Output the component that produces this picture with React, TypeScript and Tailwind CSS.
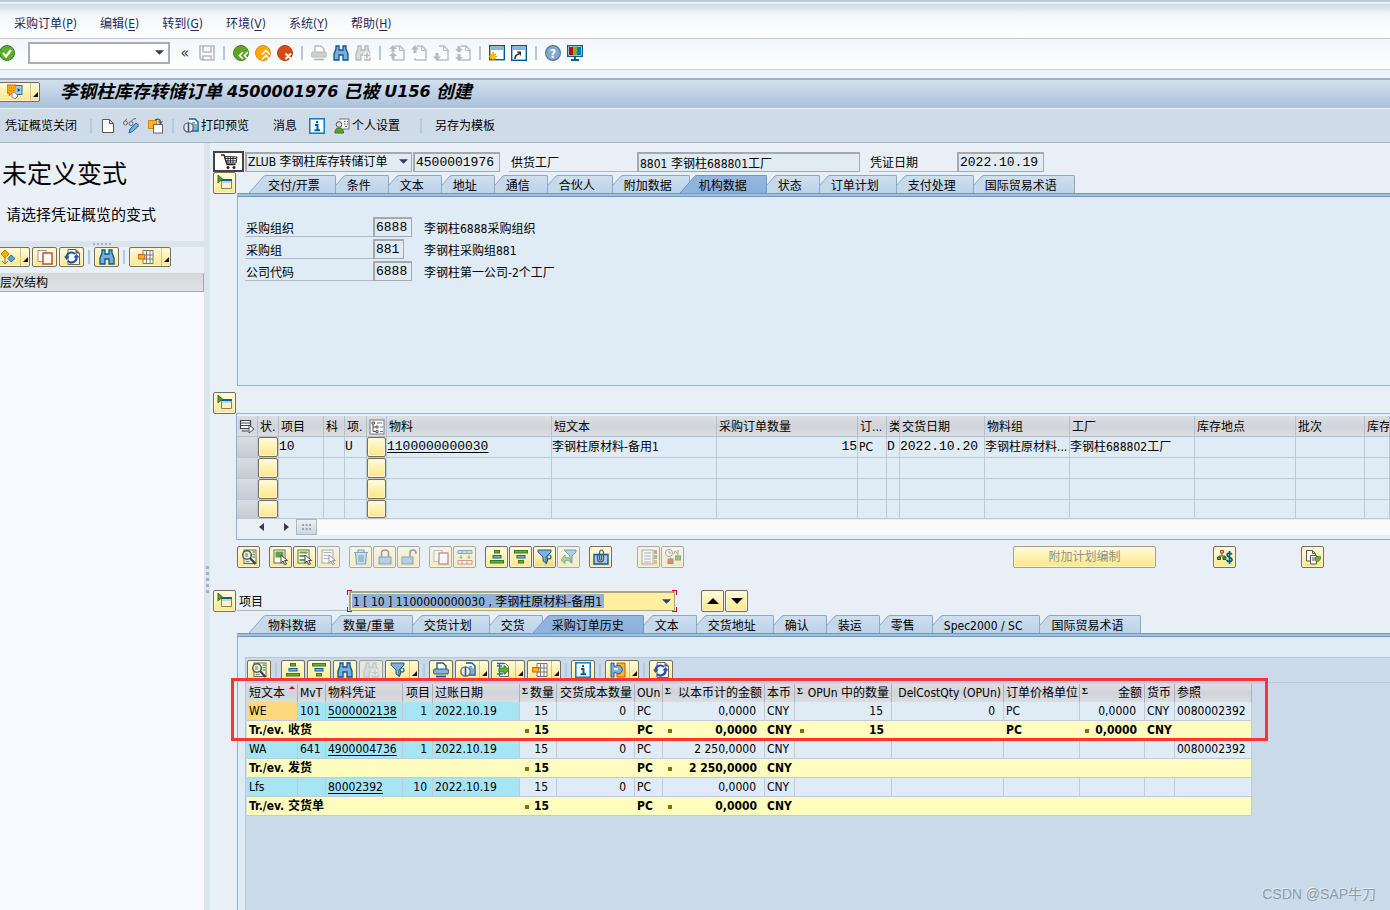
import type { ReactNode } from "react";
import { clsx } from "clsx";

const mono = "font-['Liberation_Mono','Noto_Sans_CJK_SC',monospace] text-[13px]";
const field = "h-5 border border-t-2 border-l-2 border-[#a3a9ae] bg-[#e0ebf4] px-px outline-none";
const yellow = "border border-[#77705a] rounded-[2px] bg-linear-to-b from-[#fffbe3] via-[#fff1ae] to-[#fde68a] shadow-[inset_0_0_0_1px_#fff6cf]";

const binoculars = "M1 15V9l2-5V1h3v4h4V1h3v3l2 5v6h-5v-5H6v5z";
const funnel = "M1 1h13v2L9 8v6l-3-2V8L1 3z";
const page = "M3.5 1.5h6l3 3v10h-9z";
const cursor = "M8 6v8l2-2 2 4 1.500-1-2-3.500h3z";

const Chevrons = ({ d }: { d: string }) => <path d={d} fill="none" stroke="#fff" strokeWidth="1.600" />;
const GreyPage = ({ arrow }: { arrow: string }) => (
  <>
    <path d="M6 1h5l4 4v10H4v-2" fill="none" stroke="#bdbdbd" strokeWidth="1.500" />
    <path d="M10.500 1v4.500H15" fill="none" stroke="#bdbdbd" />
    <path d={arrow} fill="#b9b9b9" />
  </>
);
const Printer = ({ stroke, fill }: { stroke: string; fill: string }) => (
  <>
    <path d="M4 7V1h6l3 3v3" fill="#fff" stroke={stroke} strokeWidth="1.400" />
    <rect x=".7" y="7" width="14.600" height="5" rx="1" fill={fill} stroke={stroke} />
    <path d="M3 14.500h10" stroke={stroke} strokeWidth="1.800" />
  </>
);
const Report = (
  <>
    <path d="M6 1h6l3 3v9H8" fill="#fff" stroke="#00639c" strokeWidth="1.400" />
    <path d="M9 5h3M9 7h5M10 9h4M10 11h4" stroke="#00639c" />
    <circle cx="5.500" cy="9.500" r="4.700" fill="#e9edf0" stroke="#666" strokeWidth="1.300" />
    <path d="M5.500 5v9" stroke="#27527c" strokeWidth="1.500" />
  </>
);
const Grid = (
  <>
    <path d="M5 1.500h10v13H5zM5 6h10M5 10h10M8.500 1.500v13M12 1.500v13" fill="#fff" stroke="#777" />
    <rect x=".7" y="5.500" width="6" height="4.500" fill="#ffb400" stroke="#e0561c" />
  </>
);
const Refresh = (
  <>
    <path d="M4 .5h8l3.500 3.500v11.500H4z" fill="#fff" stroke="#666" />
    <path d="M11.500 .5v4h4z" fill="#555" />
    <path d="M2.500 8A5 5 0 0 1 11 5M12.500 8A5 5 0 0 1 4 12" fill="none" stroke="#2450a5" strokeWidth="2.200" />
    <path d="M0 7.500h5.500L2.700 11zM9.500 8.500h6L12.500 5z" fill="#2450a5" />
  </>
);
const Detail = (
  <>
    <rect x="3" y="1" width="12" height="13.500" fill="#fff" stroke="#666" />
    <path d="M11.500 3h2.500M11.500 5.500h2.500M11.500 8h2.500M4.500 12.500h4" stroke="#5aa832" strokeWidth="1.600" />
    <circle cx="6" cy="6" r="4.300" fill="#e4efe6" stroke="#555" strokeWidth="1.500" />
    <path d="M4 5h3M4 7h3" stroke="#3d9a2c" />
    <path d="m9 9 5.500 6" stroke="#444" strokeWidth="2.400" />
  </>
);
const Info = (
  <>
    <rect x=".8" y=".8" width="14.400" height="14.400" fill="#fff" stroke="#0a7cc4" strokeWidth="1.500" />
    <path d="M8 3v2.200M6 7h2.500v5M5.500 12.300h5.500" stroke="#00609c" strokeWidth="2" fill="none" />
  </>
);

const icons: Record<string, ReactNode> = {
  check: (
    <>
      <circle cx="8" cy="8" r="7.500" fill="#5cae26" stroke="#2c7d34" />
      <path d="m4 8 3 3.500L12 5" fill="none" stroke="#fff" strokeWidth="2.200" />
    </>
  ),
  save: <path d="M1 1h14v14H3l-2-2zM4 1v6h8V1M4 15v-4h8v4" fill="none" stroke="#b9b9b9" strokeWidth="1.600" />,
  back: (
    <>
      <circle cx="8" cy="8" r="7.500" fill="#62a420" stroke="#388324" />
      <Chevrons d="M10 7 6.500 10.500 10 14M15 7l-3.500 3.500L15 14" />
    </>
  ),
  exit: (
    <>
      <circle cx="8" cy="8" r="7.500" fill="#fbab00" stroke="#e08a10" />
      <Chevrons d="m7 9.500 4-4 4 4M7 14.500l4-4 4 4" />
    </>
  ),
  cancel: (
    <>
      <circle cx="8" cy="8" r="7.500" fill="#d64a13" stroke="#b43c10" />
      <path d="m8.500 8.500 5.500 5.500M14 8.500 8.500 14" stroke="#fff" strokeWidth="2" />
    </>
  ),
  printOff: <Printer stroke="#b9b9b9" fill="#cfcfcf" />,
  print: <Printer stroke="#1d5c8a" fill="#8fb0cf" />,
  find: <path d={binoculars} fill="#7fabd9" stroke="#005c95" strokeWidth="1.300" />,
  findNext: (
    <>
      <path d={binoculars} fill="#dcdcdc" stroke="#b9b9b9" strokeWidth="1.300" />
      <path d="M12 7v7M8.500 10.500h7" stroke="#fff" strokeWidth="4" />
      <path d="M12 7.500v6M9 10.500h6" stroke="#b9b9b9" strokeWidth="1.600" />
    </>
  ),
  first: <GreyPage arrow="M4 0 0 4h2.500v2H0l4 1 4-1H5.500V4H8zM4 7l-4 4h2.500v3h3v-3H8z" />,
  prev: <GreyPage arrow="M4 0 0 4.500h2.500V8h3V4.500H8z" />,
  next: <GreyPage arrow="M4 16 0 11.500h2.500V8h3v3.500H8z" />,
  last: <GreyPage arrow="M4 16l-4-4h2.500v-2H0l4-1 4 1H5.500v2H8zM4 8 0 4h2.500V1h3v3H8z" />,
  session: (
    <>
      <rect x=".7" y=".7" width="14.600" height="14" fill="#fff" stroke="#00598f" strokeWidth="1.400" />
      <rect x="1.500" y="1.500" width="13" height="3.500" fill="#8eb1d8" />
      <path d="M4 7v9M0 11.500h8M1.200 8.700l5.600 5.600M6.800 8.700l-5.600 5.600" stroke="#ef9a10" strokeWidth="1.500" />
      <circle cx="4" cy="11.500" r="2.200" fill="#ffc800" />
    </>
  ),
  shortcut: (
    <>
      <rect x=".7" y=".7" width="14.600" height="14.600" fill="#fff" stroke="#00598f" strokeWidth="1.400" />
      <rect x="1.500" y="1.500" width="13" height="3.500" fill="#8eb1d8" />
      <path d="M4 14c0-3 1-4.500 4-5" fill="none" stroke="#333" strokeWidth="1.600" />
      <path d="M5.500 6.500H10V11z" fill="#333" />
    </>
  ),
  help: (
    <>
      <circle cx="8" cy="8" r="7.400" fill="#82a8d3" stroke="#4c7aa3" strokeWidth="1.200" />
      <text x="8" y="12.500" textAnchor="middle" fontSize="12" fontWeight="700" fill="#fff">?</text>
    </>
  ),
  monitor: (
    <>
      <rect x=".7" y=".7" width="14.600" height="10.600" fill="#fff" stroke="#00629b" strokeWidth="1.400" />
      <path d="M2 2h4v8H2z" fill="#cf0000" />
      <path d="M6 2h4v8H6z" fill="#7ab51d" />
      <path d="M10 2h4v8h-4z" fill="#0077c8" />
      <path d="M8 11v4M4 15h8" stroke="#00629b" strokeWidth="2" />
    </>
  ),
  services: (
    <>
      <path d="M0 1h9v8H5l-3 2.500V9H0z" fill="#ffab1a" stroke="#df5a12" />
      <path d="M2 4h5M2 6.500h5" stroke="#df5a12" strokeDasharray="1 1" />
      <path d="M9 1.500h6v9H8" fill="#a9cbe8" stroke="#2a6a9d" />
      <path d="m10.500 4 3 2-3 2z" fill="#0b4f85" />
      <path d="M5 9c1-2 3 0 4 1l2 2-3 3-3-2z" fill="#fff" stroke="#888" />
    </>
  ),
  page: <path d="M2.500 1.500h7l4 4v9h-11zM9.500 1.500v4h4" fill="#fff" stroke="#555" />,
  change: (
    <>
      <circle cx="2.500" cy="5" r="2" fill="none" stroke="#666" />
      <circle cx="8" cy="5.500" r="2" fill="none" stroke="#666" />
      <path d="M2 3 4 .7M8 3.500 11 .7h2" stroke="#666" fill="none" />
      <path d="m6 15 1-4 6-6 3 2.500-6.500 6z" fill="#76b0de" stroke="#1a6799" />
    </>
  ),
  other: (
    <>
      <rect x=".5" y="2.500" width="8" height="8" fill="#ffb51c" stroke="#d58a00" />
      <rect x="5.500" y="6.500" width="9" height="8.500" fill="#fff" stroke="#666" />
      <path d="M7 2c3-1.500 5-1 5.500 2" fill="none" stroke="#555" strokeWidth="1.400" />
      <path d="M10 3.500h5L12.500 6.500z" fill="#555" />
    </>
  ),
  preview: Report,
  info: Info,
  person: (
    <>
      <path d="M5 1h10v10H9" fill="#f2f4f5" stroke="#777" />
      <path d="M10 3.500h1.500M10 6h1.500M13 3.500h1M13 6h1M11 8.500h2" stroke="#555" />
      <circle cx="5" cy="6.500" r="2.800" fill="#e2ddd6" stroke="#555" />
      <path d="M1 15c0-4 1.500-5 4-5s4.500 1 4.500 5z" fill="#56a02c" stroke="#39701f" />
    </>
  ),
  cart: (
    <>
      <path d="M0 1h3l3 9.500h8.500" fill="none" stroke="#222" strokeWidth="1.300" />
      <path d="M3.500 2.500 16 3l-1 6H5.500zM4 4.500h11.500M5 6.800h10.500M7 2.500v6.500M9.500 2.500v6.500M12 2.500v6.500" fill="none" stroke="#333" />
      <circle cx="7" cy="13.500" r="1.500" fill="#222" />
      <circle cx="13" cy="13.500" r="1.500" fill="#222" />
    </>
  ),
  toggle: (
    <>
      <path d="M4.500 5.500h10v8h-10z" fill="#fdf3c3" stroke="#888266" />
      <path d="M4 5h11" stroke="#00629b" strokeWidth="2" />
      <path d="M4.500 7h10" stroke="#8fb3d4" />
      <path d="M1 0v8l4.500-4z" fill="#4f9a2a" stroke="#347a1d" />
    </>
  ),
  variant: (
    <>
      <path d="M5 1 9 5 5 9 1 5z" fill="#ffb000" stroke="#c97b00" />
      <path d="m11 6 4 3.500-4 3.500-3-3.500z" fill="#5ba3d3" stroke="#276a99" />
      <path d="M5 9v6M2 12l3 3 3-3" fill="none" stroke="#777" />
    </>
  ),
  copy: (
    <>
      <rect x="1" y="1.500" width="8" height="11" fill="#fff" stroke="#999" />
      <rect x="6" y="4" width="9" height="11" fill="#fff" stroke="#b5361c" strokeWidth="1.300" />
    </>
  ),
  refresh: Refresh,
  grid: Grid,
  detail: Detail,
  selectAll: (
    <>
      <rect x="1" y="1" width="11" height="13" fill="#fff" stroke="#666" />
      <path d="M2.500 2.500h8v6h-8z" fill="#5aa832" />
      <path d={cursor} fill="#fff" stroke="#444" />
    </>
  ),
  selectBlock: (
    <>
      <rect x="1" y="1" width="11" height="13" fill="#fff" stroke="#666" />
      <path d="M2.500 3.500h8M2.500 7h6M2.500 11h6" stroke="#5aa832" strokeWidth="2" />
      <path d={cursor} fill="#fff" stroke="#444" />
    </>
  ),
  deselect: (
    <>
      <rect x="1" y="1" width="11" height="13" fill="#fff" stroke="#777" />
      <path d="M2.500 3.500h8M2.500 6.500h6M2.500 9.500h6" stroke="#888" />
      <path d={cursor} fill="#fff" stroke="#555" />
    </>
  ),
  trash: <path d="M1 3.500h14M5 3V1h6v2M2.500 4l1 11h9l1-11M6 6v7M8 6v7M10 6v7" fill="#b9d3ea" stroke="#2c6b9c" strokeWidth="1.200" />,
  lock: (
    <>
      <path d="M4.500 8V4c0-4 7-4 7 0v4" fill="none" stroke="#555" strokeWidth="1.500" />
      <rect x="2" y="8" width="12" height="7" fill="#8fb5dc" stroke="#2c6b9c" />
    </>
  ),
  unlock: (
    <>
      <path d="M9 8V4c0-4 6-4 6 0v1" fill="none" stroke="#555" strokeWidth="1.500" />
      <rect x="1" y="8" width="11" height="7" fill="#8fb5dc" stroke="#2c6b9c" />
    </>
  ),
  insert: (
    <>
      <path d="M1 1.500h14v3H1zM5 1.500v3M10 1.500v3" fill="#b9d3ea" stroke="#2c6b9c" />
      <path d="M4 6v3M2.500 8 4 9.500 5.500 8M12 6v3M10.500 8l1.500 1.500L13.500 8" fill="none" stroke="#2c6b9c" />
      <path d="M1 11.500h14v3.500H1zM5 11.500V15M10 11.500V15" fill="#fff" stroke="#cf4f1c" />
    </>
  ),
  asc: (
    <>
      <rect x="5.500" y="1.500" width="5" height="2.500" fill="#67ad3c" stroke="#2f7c2b" />
      <rect x="4" y="6.500" width="8" height="2.500" fill="#7fb0dc" stroke="#1a5f92" />
      <rect x="1.500" y="11.500" width="13" height="2.500" fill="#67ad3c" stroke="#2f7c2b" />
    </>
  ),
  desc: (
    <>
      <rect x="1.500" y="1.500" width="13" height="2.500" fill="#67ad3c" stroke="#2f7c2b" />
      <rect x="4" y="6.500" width="8" height="2.500" fill="#7fb0dc" stroke="#1a5f92" />
      <rect x="5.500" y="11.500" width="5" height="2.500" fill="#67ad3c" stroke="#2f7c2b" />
    </>
  ),
  filter: (
    <>
      <path d={funnel} fill="#7fb0dc" stroke="#1a5f92" />
      <circle cx="12" cy="8" r="2" fill="none" stroke="#1a5f92" strokeWidth="1.200" />
      <path d="m11 10-2 5" stroke="#1a5f92" strokeWidth="1.300" />
    </>
  ),
  unfilter: (
    <>
      <path d="M3 1h12v2l-4 4v7l-2-1V7z" fill="#7fb0dc" stroke="#1a5f92" />
      <path d="M0 11 4 6v2.500c4-.5 6 1 6 5-1.500-2-3.500-2.500-6-2v3z" fill="#7dbb56" stroke="#2f7c2b" />
    </>
  ),
  attach: (
    <>
      <path d="M1 5.500h14V15H1z" fill="#a5c8e8" stroke="#00629b" strokeWidth="1.400" />
      <path d="M4.500 5v5c0 4 6 4 6 0V4c0-4-4-4-4 0v6c0 1.500 2 1.500 2 0V5" fill="none" stroke="#555" strokeWidth="1.200" />
    </>
  ),
  list: (
    <>
      <rect x="1" y="1" width="11" height="14" fill="#fff" stroke="#777" />
      <path d="M3 4h7M3 7h7M3 10h7M3 13h7" stroke="#777" />
      <path d="M13 1h3v4h-3z" fill="#d4584a" />
      <path d="M13 6h3v4h-3z" fill="#5aa832" />
      <path d="M13 11h3v4h-3z" fill="#e18a30" />
    </>
  ),
  schedule: (
    <>
      <circle cx="4" cy="4" r="3.500" fill="#fff" stroke="#666" />
      <path d="M4 2v2h2M9 5l1-3 3 3V1M5.500 10V8.500M13 7V5.500" fill="none" stroke="#666" />
      <rect x="3" y="10" width="5" height="4.500" fill="#cf3b2a" stroke="#8f2b1f" />
      <rect x="10.500" y="7" width="5" height="4" fill="#5aa832" stroke="#39701f" />
    </>
  ),
  price: (
    <>
      <path d="M5 3v4M2 9V7h6v2" fill="none" stroke="#555" />
      <path d="M3.500 1.500h3v2.500h-3z" fill="#ffb51c" stroke="#cf3b1a" />
      <path d="M.5 8h3v2.500h-3zM6 8h3v2.500H6z" fill="#5aa832" stroke="#1f5c1a" />
      <path d="M15 5.500c-1-2-5-2-5 .5s5 2 5 4.500-4 3-5.500.5M12.500 2v13" fill="none" stroke="#005a94" strokeWidth="1.700" />
    </>
  ),
  output: (
    <>
      <path d="M1.500 1.500h6l3 3V12h-9zM7.500 1.500v3h3" fill="#fff" stroke="#555" />
      <path d="M5.500 6.500h6V15h-6zM7 9h3M7 11h3" fill="#fff" stroke="#555" />
      <path d="M10 9c2-2 4-2 6-1-1 4-3 5-5 4.500z" fill="#6bb13b" stroke="#39701f" strokeWidth=".8" />
    </>
  ),
  export: (
    <>
      <path d={page} fill="#fff" stroke="#666" />
      <path d="M1 1.500h7M1 4h5M1 12h6" stroke="#1a6fa8" strokeWidth="1.500" />
      <path d="M3 6h5V3.500L13 8l-5 4.500V10H3z" fill="#5fae3d" stroke="#2f7c2b" />
    </>
  ),
  abc: (
    <>
      <path d="M7 1h8v14H7v-3c6 0 6-8 0-8z" fill="#ffb51c" stroke="#cf4f1c" />
      <path d="M1 1h3v3.500c2 0 2-1 4.500-1 5 0 5 8 0 8-2.500 0-2.500-1-4.500-1V15H1z" fill="#7fb0dc" stroke="#1a5f92" />
      <path d="M4 7h4" stroke="#fff" strokeWidth="1.500" />
    </>
  ),
  layout: (
    <>
      <path d="M1.500 1.500h10v8h-10zM1.500 4h10M1.500 6.500h10M3 12h6" fill="#fff" stroke="#445" strokeWidth="1.200" />
      <path d="M10 6v8l5-4z" fill="#fff" stroke="#445" />
    </>
  ),
  tree: (
    <>
      <rect x="1" y="1" width="14" height="14" fill="#fff" stroke="#777" />
      <path d="M4 4v8.500h3M4 8h3" fill="none" stroke="#555" />
      <path d="M3 3h2.500v2H3zM7 7h2v2H7zM7 11.500h2v2H7z" fill="#fff" stroke="#555" />
      <path d="M8 4h5M11 8h3M11 12.500h3" stroke="#1a8fd0" />
    </>
  ),
};

function Icon({ name, className = "size-4" }: { name: string; className?: string }) {
  return (
    <svg viewBox="0 0 16 16" aria-hidden="true" className={clsx("shrink-0", className)}>
      {icons[name]}
    </svg>
  );
}

function Arrow({ className }: { className?: string }) {
  return (
    <svg viewBox="0 0 10 5" aria-hidden="true" className={clsx("h-[5px] w-[9px] pointer-events-none", className)}>
      <path d="M0 0h10L5 5z" fill="#263f73" />
    </svg>
  );
}

function Sep({ className = "mx-2" }: { className?: string }) {
  return <span className={clsx("h-[14px] w-[2px] shrink-0 bg-[#b4c9dd]", className)} />;
}

type BtnProps = { icon: string; label: string; off?: boolean; on?: boolean; menu?: boolean; className?: string };

function Btn({ icon, label, off, on, menu, className = "h-[22px] w-[23px]" }: BtnProps) {
  return (
    <button
      aria-label={label}
      disabled={off}
      className={clsx(yellow, "flex shrink-0 items-center", on && "from-[#ffe9a0] via-[#ffdf80] to-[#ffd566]", off && "opacity-55", className)}
    >
      <span className="flex h-full flex-1 items-center justify-center">
        <Icon name={icon} />
      </span>
      {menu && (
        <span className="flex h-full w-[9px] items-end border-l border-[#d3c485] pb-1 pl-[2px]">
          <svg viewBox="0 0 5 5" className="size-[5px]" aria-hidden="true">
            <path d="M5 0v5H0z" fill="#111" />
          </svg>
        </span>
      )}
    </button>
  );
}

function Tabs({ items, active }: { items: string[]; active: string }) {
  return (
    <div role="tablist" className="flex h-[18px] pl-3">
      {items.map((title, i) => {
        const on = title === active;
        const wide = on || i === 0;
        return (
          <button key={title} role="tab" aria-selected={on} className={clsx("flex h-[18px] shrink-0", on && "relative z-10 -ml-[10px]")}>
            <svg
              viewBox={wide ? "0 0 17 18" : "0 0 10 18"}
              className={clsx("h-[18px]", wide ? "w-[17px]" : "w-[10px]")}
              aria-hidden="true"
            >
              <path d={wide ? "M0 18 15 1 17 0V18z" : "M0 18V10L8 1 10 0V18z"} fill={on ? "#90b4dd" : "#c6d9eb"} />
              <path d={wide ? "M0 18 15 1 17 .5" : "M0 10 8 1 10 .5"} fill="none" stroke={on ? "#6d97c4" : "#89a9c8"} />
            </svg>
            <span
              className={clsx(
                "h-[18px] rounded-tr-[2px] border-t border-r bg-linear-to-b leading-[21px] whitespace-nowrap",
                on ? "border-[#6d97c4] from-[#96b8df] to-[#89afdc]" : "border-[#89a9c8] from-[#cfdfee] to-[#bcd2e9]",
                wide ? "pl-[2px]" : "pl-px",
                on ? "pr-[19px]" : wide ? "pr-[15px]" : "pr-[17px]",
              )}
            >
              {title}
            </span>
          </button>
        );
      })}
    </div>
  );
}

const menus = [
  ["采购订单", "P"],
  ["编辑", "E"],
  ["转到", "G"],
  ["环境", "V"],
  ["系统", "Y"],
  ["帮助", "H"],
];

const headerTabs = ["交付/开票", "条件", "文本", "地址", "通信", "合伙人", "附加数据", "机构数据", "状态", "订单计划", "支付处理", "国际贸易术语"];
const itemTabs = ["物料数据", "数量/重量", "交货计划", "交货", "采购订单历史", "文本", "交货地址", "确认", "装运", "零售", "Spec2000 / SC", "国际贸易术语"];

const orgFields = [
  { id: "ekorg", label: "采购组织", value: "6888", text: "李钢柱6888采购组织", width: "w-[39px]" },
  { id: "ekgrp", label: "采购组", value: "881", text: "李钢柱采购组881", width: "w-[31px]" },
  { id: "bukrs", label: "公司代码", value: "6888", text: "李钢柱第一公司-2个工厂", width: "w-[39px]" },
];

const itemCols = [
  { w: 21, title: "", icon: "layout" },
  { w: 21, title: "状." },
  { w: 45, title: "项目" },
  { w: 21, title: "科" },
  { w: 22, title: "项." },
  { w: 20, title: "", icon: "tree" },
  { w: 165, title: "物料" },
  { w: 165, title: "短文本" },
  { w: 141, title: "采购订单数量" },
  { w: 29, title: "订..." },
  { w: 13, title: "类" },
  { w: 85, title: "交货日期" },
  { w: 85, title: "物料组" },
  { w: 125, title: "工厂" },
  { w: 101, title: "库存地点" },
  { w: 69, title: "批次" },
  { w: 0, title: "库存" },
];

const itemRow = ["", "", "10", "", "U", "", "1100000000030", "李钢柱原材料-备用1", "15", "PC", "D", "2022.10.20", "李钢柱原材料...", "李钢柱688802工厂", "", "", ""];
const monoCols = [2, 4, 6, 8, 10, 11];

const histCols = [
  { w: 51, title: "短文本", sorted: true },
  { w: 28, title: "MvT" },
  { w: 77, title: "物料凭证" },
  { w: 30, title: "项目", num: true },
  { w: 87, title: "过账日期" },
  { w: 37, title: "数量", num: true, sum: true },
  { w: 78, title: "交货成本数量", num: true },
  { w: 28, title: "OUn" },
  { w: 102, title: "以本币计的金额", num: true, sum: true },
  { w: 30, title: "本币" },
  { w: 97, title: "OPUn 中的数量", num: true, sum: true },
  { w: 112, title: "DelCostQty (OPUn)", num: true },
  { w: 76, title: "订单价格单位" },
  { w: 65, title: "金额", num: true, sum: true },
  { w: 30, title: "货币" },
  { w: 77, title: "参照" },
];

const history = [
  {
    cells: ["WE", "101", "5000002138", "1", "2022.10.19", "15", "0", "PC", "0,0000", "CNY", "15", "0", "PC", "0,0000", "CNY", "0080002392"],
    total: ["Tr./ev. 收货", "15", "", "PC", "0,0000", "CNY", "15", "", "PC", "0,0000", "CNY", ""],
  },
  {
    cells: ["WA", "641", "4900004736", "1", "2022.10.19", "15", "0", "PC", "2 250,0000", "CNY", "", "", "", "", "", "0080002392"],
    total: ["Tr./ev. 发货", "15", "", "PC", "2 250,0000", "CNY", "", "", "", "", "", ""],
  },
  {
    cells: ["Lfs", "", "80002392", "10", "2022.10.19", "15", "0", "PC", "0,0000", "CNY", "", "", "", "", "", ""],
    total: ["Tr./ev. 交货单", "15", "", "PC", "0,0000", "CNY", "", "", "", "", "", ""],
  },
];

const itemTools: BtnProps[][] = [
  [{ icon: "detail", label: "明细" }],
  [
    { icon: "selectAll", label: "全选" },
    { icon: "selectBlock", label: "选择块" },
    { icon: "deselect", label: "取消选择", off: true },
  ],
  [
    { icon: "trash", label: "删除", off: true },
    { icon: "lock", label: "锁定", off: true },
    { icon: "unlock", label: "解锁", off: true },
  ],
  [
    { icon: "copy", label: "复制", off: true },
    { icon: "insert", label: "插入", off: true },
  ],
  [
    { icon: "asc", label: "升序" },
    { icon: "desc", label: "降序" },
    { icon: "filter", label: "过滤器", on: true },
    { icon: "unfilter", label: "删除过滤器", off: true },
  ],
  [{ icon: "attach", label: "附件" }],
];

const histTools: BtnProps[][] = [
  [{ icon: "detail", label: "明细" }],
  [
    { icon: "asc", label: "升序" },
    { icon: "desc", label: "降序" },
    { icon: "find", label: "查找" },
    { icon: "findNext", label: "查找下一个", off: true },
    { icon: "filter", label: "过滤器", menu: true },
  ],
  [
    { icon: "print", label: "打印" },
    { icon: "preview", label: "视图", menu: true },
    { icon: "export", label: "导出", menu: true },
    { icon: "grid", label: "布局", menu: true },
  ],
  [{ icon: "info", label: "信息" }],
  [{ icon: "abc", label: "ABC 分析", menu: true }],
  [{ icon: "refresh", label: "刷新" }],
];

const topGroups = [["back", "exit", "cancel"], ["printOff", "find", "findNext"], ["first", "prev", "next", "last"], ["session", "shortcut"], ["help", "monitor"]];

function TopBars() {
  return (
    <header>
      <div className="h-1 border-t border-b-2 border-[#b9c8da] border-b-[#e9eff6] bg-[#c4d2e2]" />
      <nav className="flex h-[35px] items-center gap-[23px] border-b border-[#c3c7d3] bg-linear-to-b from-[#ccd9e7] via-[#f4f7fb] via-30% to-white pt-[6px] pl-[14px] text-[#1d2a5b]">
        {menus.map(([title, key]) => (
          <button key={key} className="whitespace-nowrap">
            {title}(<u className="underline-offset-2">{key}</u>)
          </button>
        ))}
      </nav>
      <div className="flex h-[31px] items-center border-b border-[#cfd2dc] bg-linear-to-b from-[#f3f6fa] to-white pb-[2px]">
        <button aria-label="回车" className="-ml-px">
          <Icon name="check" />
        </button>
        <div className="relative ml-[13px]">
          <input aria-label="命令" className="block h-[22px] w-[142px] border-2 border-[#a9adb6] bg-white px-1 outline-none" />
          <Arrow className="absolute top-2 right-[6px]" />
        </div>
        <button aria-label="收起" className="ml-[9px] w-3 text-base leading-4 text-[#444]">«</button>
        <button aria-label="保存" className="ml-2">
          <Icon name="save" />
        </button>
        {topGroups.map((group) => (
          <div key={group[0]} className="flex items-center">
            <Sep />
            <div className="flex gap-[6px]">
              {group.map((name) => (
                <button key={name} aria-label={name}>
                  <Icon name={name} />
                </button>
              ))}
            </div>
          </div>
        ))}
      </div>
      <div className="h-2 bg-[#eff2f8]" />
      <div className="flex h-[31px] items-center border-t-2 border-b border-t-[#9db1ca] border-b-[#e8f0f7] bg-linear-to-b from-[#d3e1ee] to-[#aac0da] pb-1">
        <Btn icon="services" label="对象服务" menu className="-ml-[2px] h-5 w-[42px]" />
        <h1 className="ml-5 flex items-center gap-[5px] text-lg leading-6 font-bold whitespace-nowrap italic">
          <span>李钢柱库存转储订单</span>
          <span className="font-['DejaVu_Sans',sans-serif] text-base">4500001976</span>
          <span>已被</span>
          <span className="font-['DejaVu_Sans',sans-serif] text-base">U156</span>
          <span>创建</span>
        </h1>
      </div>
      <div className="flex h-[34px] items-center border-b border-[#9fb7cb] bg-[#cfdce8] pl-[5px] whitespace-nowrap">
        <button>凭证概览关闭</button>
        <Sep className="mr-2 ml-[13px]" />
        <button aria-label="新建"><Icon name="page" /></button>
        <button aria-label="显示/更改" className="ml-[7px]"><Icon name="change" /></button>
        <button aria-label="其他凭证" className="ml-[9px]"><Icon name="other" /></button>
        <Sep className="mr-[9px] ml-2" />
        <button className="flex items-center gap-[2px]"><Icon name="preview" />打印预览</button>
        <button className="ml-6">消息</button>
        <button aria-label="帮助" className="ml-3"><Icon name="info" /></button>
        <button className="ml-[9px] flex items-center gap-[2px]"><Icon name="person" />个人设置</button>
        <Sep className="mr-[13px] ml-5" />
        <button>另存为模板</button>
      </div>
    </header>
  );
}

function Overview() {
  return (
    <aside className="flex w-[204px] shrink-0 flex-col bg-[#f7fbff]">
      <div className="h-[98px] bg-[#e9f0f7] whitespace-nowrap">
        <h2 className="pt-4 pl-[2px] text-[25px] leading-8">未定义变式</h2>
        <p className="mt-[14px] pl-[6px] text-[15px] leading-5">请选择凭证概览的变式</p>
      </div>
      <div className="flex h-[6px] items-center justify-center gap-[2px] bg-[#dbe4eb]">
        {[0, 1, 2, 3, 4].map((n) => (
          <span key={n} className="size-[2px] bg-[#a4b3c0]" />
        ))}
      </div>
      <div className="flex h-[26px] items-start bg-[#e9f0f7]">
        <Btn icon="variant" label="变式" menu className="-ml-[6px] h-5 w-9" />
        <Btn icon="copy" label="复制" className="ml-[2px] h-5 w-[25px]" />
        <Btn icon="refresh" label="刷新" className="ml-[2px] h-5 w-[25px]" />
        <Sep className="mx-1 mt-[3px]" />
        <Btn icon="find" label="查找" className="h-5 w-[25px]" />
        <Sep className="mx-1 mt-[3px]" />
        <Btn icon="grid" label="布局" menu className="h-5 w-[42px]" />
      </div>
      <div className="h-[19px] border-r border-b border-[#9fa6ad] bg-linear-to-b from-[#d3d7da] to-[#e0e3e5] leading-[21px]">层次结构</div>
    </aside>
  );
}

function ItemTable() {
  return (
    <table className="w-full table-fixed border-separate border-spacing-0 whitespace-nowrap">
      <colgroup>
        {itemCols.map((c, i) => (
          <col key={i} style={c.w ? { width: c.w } : undefined} />
        ))}
      </colgroup>
      <thead>
        <tr>
          {itemCols.map((c, i) => (
            <th key={i} className="h-[21px] overflow-hidden border-r border-b border-[#b4bfcd] bg-linear-to-b from-[#dbdfe3] via-[#d1d5db] to-[#dadee2] p-0 pt-[2px] pl-[2px] text-left leading-[18px] font-normal">
              {c.icon ? <Icon name={c.icon} /> : c.title}
            </th>
          ))}
        </tr>
      </thead>
      <tbody>
        {[0, 1, 2, 3].map((row) => (
          <tr key={row}>
            {itemCols.map((c, i) => (
              <td
                key={i}
                className={clsx(
                  "overflow-hidden border-r border-b border-[#bcc8d6] p-0",
                  row === 3 ? "h-[19px] leading-[18px]" : "h-[21px] leading-5",
                  i === 0 ? "bg-linear-to-b from-[#d9dce3] to-[#c6cbd3]" : "bg-[#dfebf5]",
                  i === 8 && "text-right",
                  i === 9 && "pl-px",
                  monoCols.includes(i) && mono,
                )}
              >
                {i === 1 || i === 5 ? (
                  <button aria-label={c.title || "明细"} className={clsx(yellow, "block w-full", row === 3 ? "h-[18px]" : "h-5")} />
                ) : row > 0 ? null : i === 6 ? (
                  <a href="#" className="underline underline-offset-2">{itemRow[i]}</a>
                ) : (
                  itemRow[i]
                )}
              </td>
            ))}
          </tr>
        ))}
      </tbody>
    </table>
  );
}

function SumMark() {
  return <span className="float-left mt-2 ml-[5px] size-1 bg-[#7d7500]" />;
}

function HistoryTable() {
  const pad = (i: number) => (histCols[i].num ? (i === 3 ? "text-right pr-[5px]" : "text-right pr-2") : "pl-[2px]");
  // total rows merge the five key columns, so cell i sits in column i + 4
  return (
    <table className="w-[1005px] table-fixed border-separate border-spacing-0 whitespace-nowrap">
      <colgroup>
        {histCols.map((c) => (
          <col key={c.title} style={{ width: c.w }} />
        ))}
      </colgroup>
      <thead>
        <tr>
          {histCols.map((c) => (
            <th
              key={c.title}
              className={clsx(
                "h-[18px] border-r border-[#a9b1bc] bg-linear-to-b from-[#dcdfe3] via-[#d0d3d9] to-[#dadde1] p-0 px-[2px] leading-[18px] font-normal",
                c.num ? "text-right" : "text-left",
              )}
            >
              {c.sum && <span className="float-left font-['Liberation_Serif',serif] text-[9px] leading-[14px] font-bold">Σ</span>}
              {c.title}
              {c.sorted && (
                <svg viewBox="0 0 6 3" className="float-right mt-[2px] h-[3px] w-[6px]" aria-hidden="true">
                  <path d="M3 0l3 3H0z" fill="#c0002a" />
                </svg>
              )}
            </th>
          ))}
        </tr>
      </thead>
      {history.map((group, g) => (
        <tbody key={g}>
          <tr>
            {group.cells.map((text, i) => (
              <td
                key={i}
                className={clsx(
                  "h-[19px] border-r border-b border-[#bfcbd8] p-0 leading-[18px]",
                  g === 0 && i === 0 ? "bg-[#ffd97f]" : i < 5 ? "bg-[#a6e5f4]" : "bg-[#dfebf5]",
                  pad(i),
                )}
              >
                {i === 2 ? <a href="#" className="underline underline-offset-2">{text}</a> : text}
              </td>
            ))}
          </tr>
          <tr className="font-bold">
            {group.total.map((text, i) => (
              <td
                key={i}
                colSpan={i === 0 ? 5 : 1}
                className={clsx("h-[19px] border-b border-[#bfcbd8] bg-[#fffcc0] p-0 leading-[18px]", i === 0 ? "pl-[2px]" : pad(i + 4), i === 11 && "border-r")}
              >
                {i > 0 && histCols[i + 4].sum && text && <SumMark />}
                {text}
              </td>
            ))}
          </tr>
        </tbody>
      ))}
    </table>
  );
}

function OrderHeader() {
  return (
    <div className="flex items-center pl-[3px] whitespace-nowrap">
      <button aria-label="采购订单" className="flex h-[21px] w-[31px] items-center justify-center border-2 border-[#444] bg-white">
        <Icon name="cart" className="h-4 w-5" />
      </button>
      <div className="relative ml-px">
        <select aria-label="订单类型" className={clsx(field, "block w-[167px] appearance-none")}>
          <option>ZLUB 李钢柱库存转储订单</option>
        </select>
        <Arrow className="absolute top-[7px] right-1" />
      </div>
      <input aria-label="采购订单编号" readOnly defaultValue="4500001976" className={clsx(field, mono, "ml-px w-[87px]")} />
      <label htmlFor="reswk" className="ml-[9px] h-5 w-32 border-b border-[#b3b8bc] pl-[2px] leading-[22px]">供货工厂</label>
      <input id="reswk" readOnly defaultValue="8801 李钢柱688801工厂" className={clsx(field, "w-[223px]")} />
      <label htmlFor="bedat" className="ml-[9px] h-5 w-[88px] border-b border-[#b3b8bc] pl-px leading-[22px]">凭证日期</label>
      <input id="bedat" readOnly defaultValue="2022.10.19" className={clsx(field, mono, "w-[87px]")} />
    </div>
  );
}

const tabBar = "h-1 border-y border-[#7199c0] bg-[#a0bfdf]";

export default function App() {
  return (
    <div className="relative flex min-h-screen flex-col overflow-hidden bg-[#e8eff7] font-['DejaVu_Sans_Condensed','Noto_Sans','Noto_Sans_CJK_SC',sans-serif] text-xs leading-4 text-black">
      <TopBars />
      <div className="flex flex-1">
        <Overview />
        <div className="flex w-[6px] shrink-0 flex-col items-center justify-center gap-[3px] bg-[#dbe5ec] pt-[106px]">
          {[0, 1, 2, 3, 4].map((n) => (
            <span key={n} className="size-[3px] bg-[#a4b0c4]" />
          ))}
        </div>
        <main className="flex min-w-0 flex-1 flex-col pt-2">
          <OrderHeader />

          <section className="flex">
            <div className="w-[27px] shrink-0 pl-[3px]">
              <Btn icon="toggle" label="抬头" />
            </div>
            <div className="min-w-0 flex-1 pt-[3px]">
              <Tabs items={headerTabs} active="机构数据" />
              <div className={tabBar} />
              <div className="flex h-[189px] flex-col gap-[2px] border-b border-l border-[#8fb0cf] bg-[#dfebf5] pt-5 pl-[7px]">
                {orgFields.map((f) => (
                  <div key={f.id} className="flex h-5">
                    <label htmlFor={f.id} className="w-32 border-b border-[#b3b8bc] pl-px leading-6">{f.label}</label>
                    <input id={f.id} readOnly defaultValue={f.value} className={clsx(field, mono, f.width)} />
                    <span className={clsx("leading-6", f.width === "w-[31px]" ? "ml-5" : "ml-3")}>{f.text}</span>
                  </div>
                ))}
              </div>
            </div>
          </section>

          <section className="pt-[6px]">
            <div className="h-[21px] pl-[3px]">
              <Btn icon="toggle" label="项目概览" />
            </div>
            <div className="ml-[26px] overflow-hidden border-y border-l border-[#8fb0cf] pt-[2px] pb-1">
              <ItemTable />
              <div className="flex h-4 items-center pl-[22px]">
                <button aria-label="向左" className="w-[18px] text-center">
                  <svg viewBox="0 0 5 8" className="h-2 w-[5px]" aria-hidden="true"><path d="M5 0v8L0 4z" fill="#333c48" /></svg>
                </button>
                <button aria-label="向右" className="w-[18px] text-center">
                  <svg viewBox="0 0 5 8" className="mx-auto h-2 w-[5px]" aria-hidden="true"><path d="M0 0v8l5-4z" fill="#333c48" /></svg>
                </button>
                <span className="ml-px flex h-4 w-[21px] items-center justify-center border border-[#a9b6c3] bg-linear-to-b from-[#eaf1f7] to-[#c9d8e6]">
                  <svg viewBox="0 0 9 6" className="h-[6px] w-[9px]" aria-hidden="true">
                    <path d="M0 1h2M3.500 1h2M7 1h2M0 5h2M3.500 5h2M7 5h2" stroke="#93a3b3" strokeWidth="2" />
                  </svg>
                </span>
                <span className="h-[15px] flex-1 bg-[#fafafa]" />
              </div>
            </div>
          </section>

          <div className="mt-[6px] flex pl-[27px]">
            <div className="flex gap-[9px]">
              {itemTools.map((group) => (
                <div key={group[0].icon} className="flex gap-px">
                  {group.map((b) => (
                    <Btn key={b.icon} {...b} />
                  ))}
                </div>
              ))}
            </div>
            <div className="ml-[25px] flex gap-px">
              <Btn icon="list" label="条件" off />
              <Btn icon="schedule" label="计划" off />
            </div>
            <button disabled className={clsx(yellow, "ml-[329px] h-[22px] w-[143px] border-[#a8a187] text-[#8f8f88]")}>附加计划编制</button>
            <Btn icon="price" label="价格" className="ml-[57px] h-[22px] w-[23px]" />
            <Btn icon="output" label="输出" className="ml-[65px] h-[22px] w-[23px]" />
          </div>

          <div className="mt-[22px] flex pl-[3px]">
            <Btn icon="toggle" label="项目明细" />
            <label htmlFor="item" className="ml-px h-[21px] w-[110px] border-b border-[#b3b8bc] pl-[2px] leading-6">项目</label>
            <div className="relative h-[22px] w-[330px]">
              <span className="absolute top-0 left-0 h-[5px] w-[5px] border-t border-l border-[#d9001b]" />
              <span className="absolute bottom-0 left-0 h-[5px] w-[5px] border-b border-l border-[#d9001b]" />
              <span className="absolute top-0 right-0 h-[5px] w-[5px] border-t border-r border-[#d9001b]" />
              <span className="absolute right-0 bottom-0 h-[5px] w-[5px] border-r border-b border-[#d9001b]" />
              <select
                id="item"
                className="relative mx-[2px] mt-px block h-5 w-[326px] appearance-none border border-t-2 border-l-2 border-[#aba77f] bg-[#ffef9e] bg-[linear-gradient(#90b0d8,#90b0d8)] bg-[length:252px_14px] bg-[position:1px_1px] bg-no-repeat pl-[2px] outline-none"
              >
                <option>1 [ 10 ] 1100000000030 , 李钢柱原材料-备用1</option>
              </select>
              <Arrow className="absolute top-[9px] right-[6px]" />
            </div>
            <button aria-label="上一项" className={clsx(yellow, "ml-6 flex h-[22px] w-[23px] items-center justify-center")}>
              <svg viewBox="0 0 12 6" className="h-[6px] w-3" aria-hidden="true"><path d="M6 0l6 6H0z" /></svg>
            </button>
            <button aria-label="下一项" className={clsx(yellow, "ml-px flex h-[22px] w-[23px] items-center justify-center")}>
              <svg viewBox="0 0 12 6" className="h-[6px] w-3" aria-hidden="true"><path d="M0 0h12L6 6z" /></svg>
            </button>
          </div>

          <section className="mt-[3px] ml-[27px] flex flex-1 flex-col">
            <Tabs items={itemTabs} active="采购订单历史" />
            <div className={tabBar} />
            <div className="flex flex-1 flex-col border-l border-[#8fb0cf] bg-[#dfebf5] pt-5 pl-[7px]">
              <div className="flex-1 border-t border-l border-[#b4c6d8] bg-[#cbdae9]">
                <div className="flex h-[25px] items-center border-b border-[#b9cadb] pl-px">
                  {histTools.map((group, i) => (
                    <div key={i} className="flex items-center">
                      {i > 0 && <Sep className="mx-1" />}
                      <div className="flex gap-[2px]">
                        {group.map((b) => (
                          <Btn key={b.icon} {...b} className={b.menu ? "h-[21px] w-[34px]" : "h-[21px] w-6"} />
                        ))}
                      </div>
                    </div>
                  ))}
                </div>
                <div className="relative pt-px pl-px">
                  <HistoryTable />
                  <div className="pointer-events-none absolute -top-[5px] -left-[15px] h-[63px] w-[1037px] border-3 border-[#fb3434]" />
                </div>
              </div>
            </div>
          </section>
        </main>
      </div>
      <span className="absolute right-[14px] bottom-2 font-['Liberation_Sans','Noto_Sans_CJK_SC',sans-serif] text-sm leading-4 text-[#8d9aa6] [text-shadow:-1px_-1px_0_#e3ecf3]">
        CSDN @SAP牛刀
      </span>
    </div>
  );
}
